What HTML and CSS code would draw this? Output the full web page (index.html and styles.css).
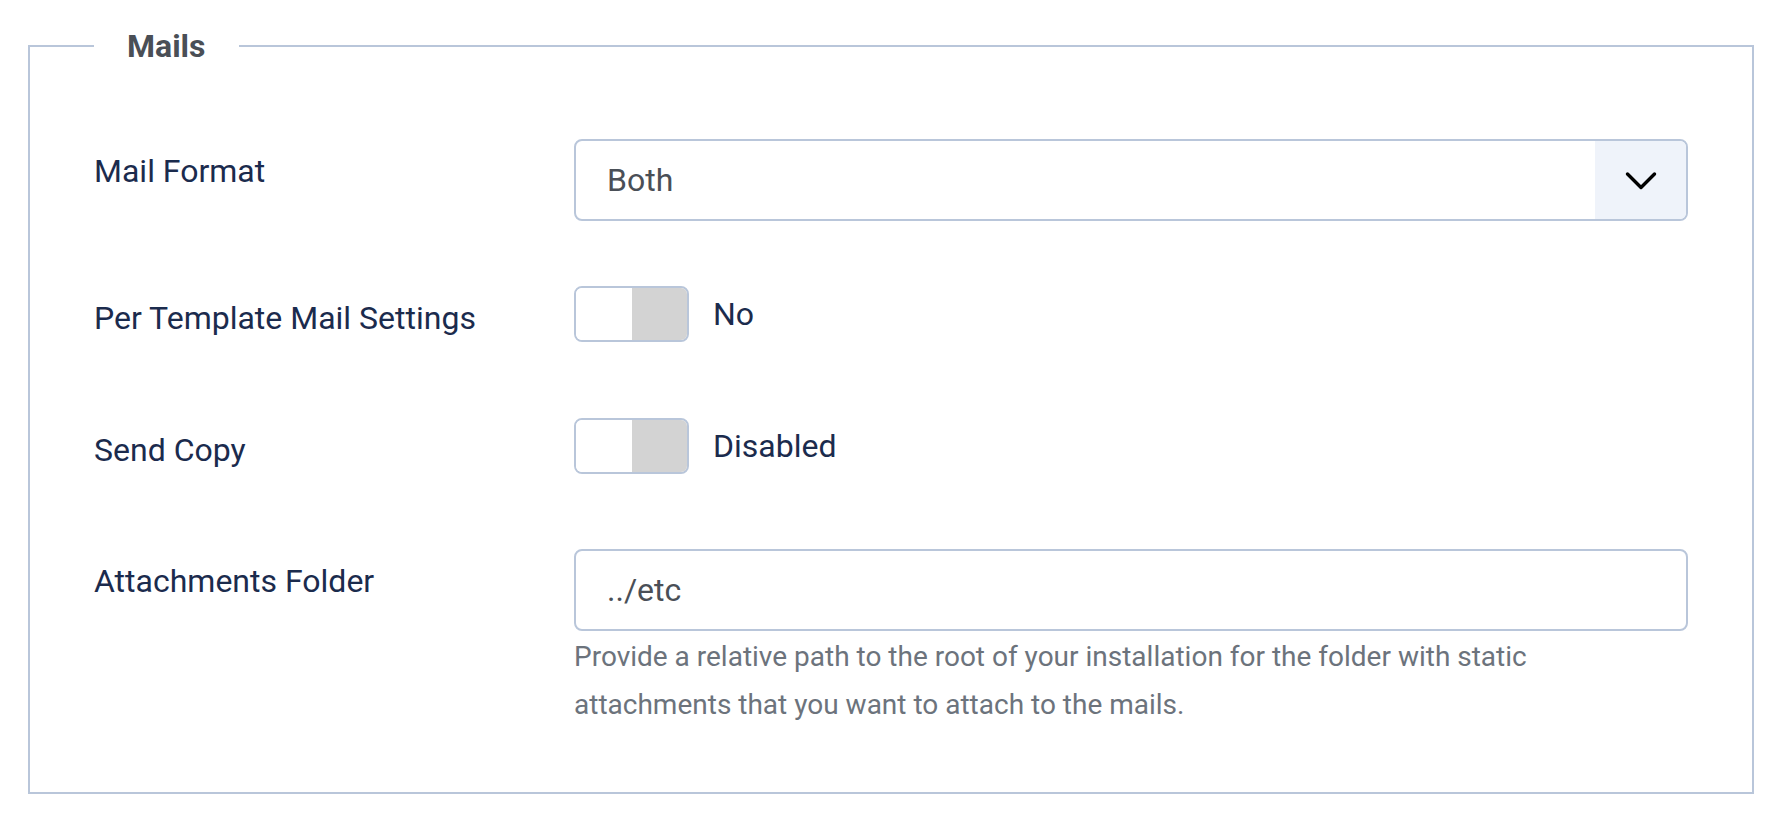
FILE: index.html
```html
<!DOCTYPE html>
<html lang="en">
<head>
<meta charset="utf-8">
<title>Mails</title>
<link rel="stylesheet" href="styles.css">
</head>
<body>
<div class="page">
  <fieldset class="card">
    <legend class="card-title">Mails</legend>

    <div class="group">
      <div class="label">Mail Format</div>
      <div class="control">
        <div class="select">
          <span class="select-value">Both</span>
          <span class="select-arrow">
            <svg width="32" height="20" viewBox="0 0 32 20" aria-hidden="true">
              <polyline points="2.5,3 16,16.5 29.5,3" fill="none" stroke="#000" stroke-width="3.4" stroke-linecap="round" stroke-linejoin="round"/>
            </svg>
          </span>
        </div>
      </div>
    </div>

    <div class="group">
      <div class="label">Per Template Mail Settings</div>
      <div class="control switch-row">
        <div class="switch">
          <span class="toggle"><span class="toggle-on"></span><span class="toggle-off"></span></span>
          <span class="switch-text">No</span>
        </div>
      </div>
    </div>

    <div class="group">
      <div class="label">Send Copy</div>
      <div class="control switch-row">
        <div class="switch">
          <span class="toggle"><span class="toggle-on"></span><span class="toggle-off"></span></span>
          <span class="switch-text">Disabled</span>
        </div>
      </div>
    </div>

    <div class="group last">
      <div class="label">Attachments Folder</div>
      <div class="control">
        <div class="input">../etc</div>
        <div class="help">Provide a relative path to the root of your installation for the folder with static attachments that you want to attach to the mails.</div>
      </div>
    </div>
  </fieldset>
</div>
</body>
</html>
```

FILE: styles.css
```css
html, body {
  margin: 0;
  padding: 0;
  background: #ffffff;
}

body {
  font-family: Roboto, "Liberation Sans", Arial, sans-serif;
}

.page {
  padding: 27px 28px 0;
}

.card {
  margin: 0;
  min-width: 0;
  border: 2px solid #b9c6da;
  padding: 74px 64px 63px;
}

.card-title {
  padding: 0 33px;
  font-size: 32px;
  line-height: 38px;
  font-weight: 700;
  color: #4a4f56;
}

.group {
  display: grid;
  grid-template-columns: 480px 1fr;
  margin-bottom: 65px;
}

.group.last {
  margin-bottom: 0;
}

.label {
  padding-top: 8px;
  font-size: 32px;
  line-height: 48px;
  color: #1b2b4d;
}

.select {
  box-sizing: border-box;
  height: 82px;
  border: 2px solid #b9c6da;
  border-radius: 8px;
  display: flex;
  align-items: stretch;
  overflow: hidden;
}

.select-value {
  flex: 1;
  display: flex;
  align-items: center;
  padding-left: 31px;
  font-size: 32px;
  line-height: 48px;
  color: #4a4f57;
}

.select-arrow {
  width: 91px;
  background: #eff3fa;
  display: flex;
  align-items: center;
  justify-content: center;
}

.select-arrow svg {
  display: block;
  margin-left: 1px;
  margin-top: 2px;
}

.switch-row {
  height: 66.5px;
}

.switch {
  display: flex;
  align-items: center;
  gap: 24px;
}

.toggle {
  box-sizing: border-box;
  width: 115px;
  height: 56px;
  border: 2px solid #b9c6da;
  border-radius: 8px;
  overflow: hidden;
  display: flex;
}

.toggle-on {
  flex: 1;
  background: #ffffff;
}

.toggle-off {
  flex: 1;
  background: #d3d3d3;
}

.switch-text {
  font-size: 32px;
  line-height: 48px;
  color: #1b2b4d;
}

.input {
  box-sizing: border-box;
  height: 82px;
  border: 2px solid #b9c6da;
  border-radius: 8px;
  display: flex;
  align-items: center;
  padding-left: 31px;
  font-size: 32px;
  line-height: 48px;
  color: #4a4f57;
}

.help {
  margin-top: 2px;
  font-size: 28px;
  line-height: 48px;
  color: #6c737c;
}
```
